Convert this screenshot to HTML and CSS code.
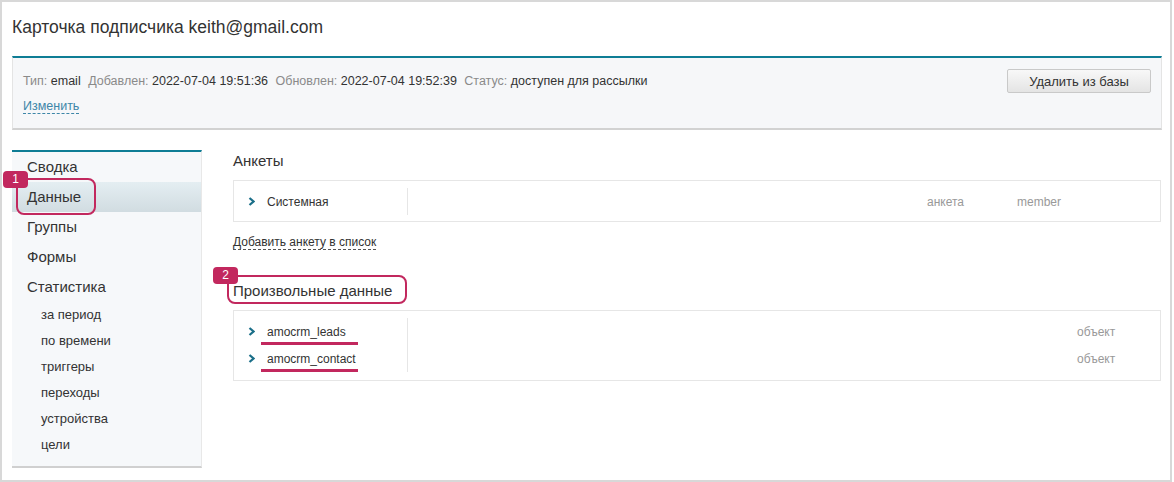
FILE: index.html
```html
<!DOCTYPE html>
<html lang="ru">
<head>
<meta charset="utf-8">
<title>Карточка подписчика</title>
<link rel="stylesheet" href="styles.css">
</head>
<body>
<div class="frame">
  <div class="title">Карточка подписчика keith@gmail.com</div>
  <div class="meta">
    <div class="meta-left">
      <div class="meta-info">
        <span class="lbl">Тип:</span> <span class="val">email</span>
        <span class="lbl">Добавлен:</span> <span class="val">2022-07-04 19:51:36</span>
        <span class="lbl">Обновлен:</span> <span class="val">2022-07-04 19:52:39</span>
        <span class="lbl">Статус:</span> <span class="val">доступен для рассылки</span>
      </div>
      <div class="edit-line"><span class="edit">Изменить</span></div>
    </div>
    <button class="btn">Удалить из базы</button>
  </div>
  <div class="body">
    <div class="sidebar">
      <div class="item">Сводка</div>
      <div class="item active">Данные</div>
      <div class="item">Группы</div>
      <div class="item">Формы</div>
      <div class="item">Статистика</div>
      <div class="sub">за период</div>
      <div class="sub">по времени</div>
      <div class="sub">триггеры</div>
      <div class="sub">переходы</div>
      <div class="sub">устройства</div>
      <div class="sub">цели</div>
      <div class="mark-box mark1"></div>
      <div class="badge badge1">1</div>
    </div>
    <div class="main">
      <div class="heading">Анкеты</div>
      <div class="table t1">
        <div class="row">
          <div class="name-cell"><svg class="chev" width="7" height="9" viewBox="0 0 7 9"><polyline points="1.5,1 5.5,4.5 1.5,8" fill="none" stroke="#1b6f89" stroke-width="2.2"/></svg><span class="name">Системная</span></div>
          <div class="spacer"></div>
          <div class="cell c-type">анкета</div>
          <div class="cell c-id">member</div>
        </div>
      </div>
      <div class="add-line"><span class="add">Добавить анкету в список</span></div>
      <div class="heading h2">Произвольные данные</div>
      <div class="table t2">
        <div class="row r2">
          <div class="name-cell"><svg class="chev" width="7" height="9" viewBox="0 0 7 9"><polyline points="1.5,1 5.5,4.5 1.5,8" fill="none" stroke="#1b6f89" stroke-width="2.2"/></svg><span class="name">amocrm_leads</span><span class="uline"></span></div>
          <div class="spacer"></div>
          <div class="cell c-obj">объект</div>
        </div>
        <div class="row r2">
          <div class="name-cell"><svg class="chev" width="7" height="9" viewBox="0 0 7 9"><polyline points="1.5,1 5.5,4.5 1.5,8" fill="none" stroke="#1b6f89" stroke-width="2.2"/></svg><span class="name">amocrm_contact</span><span class="uline"></span></div>
          <div class="spacer"></div>
          <div class="cell c-obj">объект</div>
        </div>
      </div>
      <div class="mark-box mark2"></div>
      <div class="badge badge2">2</div>
    </div>
  </div>
</div>
</body>
</html>
```

FILE: styles.css
```css
html, body {
  margin: 0;
  padding: 0;
  background: #fff;
}
body {
  font-family: "Liberation Sans", Arial, sans-serif;
  color: #333;
}
.frame {
  box-sizing: border-box;
  width: 1172px;
  height: 482px;
  border: 2px solid #d8d8d8;
  padding: 0 8px 0 10px;
}
.title {
  height: 54px;
  box-sizing: border-box;
  padding-top: 13px;
  line-height: 24px;
  font-size: 17.5px;
  color: #333;
}
.meta {
  display: flex;
  justify-content: space-between;
  align-items: flex-start;
  background: #f6f7f9;
  border-top: 2px solid #0e7d95;
  border-bottom: 2px solid #d2d2d2;
  border-left: 1px solid #e4e4e4;
  border-right: 1px solid #e4e4e4;
  padding: 11px 10px 12px 10px;
}
.meta-info {
  line-height: 24px;
  height: 24px;
  font-size: 12.5px;
  white-space: nowrap;
}
.lbl { color: #8a8a8a; }
.val { color: #333; margin-right: 4px; }
.edit-line {
  margin-top: 3px;
  line-height: 20px;
  height: 20px;
  font-size: 12.5px;
}
.edit {
  color: #3d86a8;
  border-bottom: 1px dashed #3d86a8;
}
.btn {
  width: 144px;
  height: 24px;
  border: 1px solid #c9c9c9;
  border-radius: 2px;
  background: linear-gradient(#f8f8f8, #e4e4e4);
  font-family: inherit;
  font-size: 13px;
  color: #333;
  padding: 0;
}
.body {
  display: flex;
  margin-top: 20px;
  gap: 31px;
}
.sidebar {
  position: relative;
  width: 190px;
  flex: none;
  box-sizing: border-box;
  background: #f6f8fa;
  border-top: 2px solid #0e7d95;
  border-bottom: 2px solid #d0d0d0;
  border-right: 1px solid #e8e8e8;
  padding-bottom: 8px;
}
.item {
  height: 30px;
  line-height: 30px;
  padding-left: 15px;
  font-size: 15px;
  color: #333;
}
.item.active {
  background: linear-gradient(#e4eef2, #d1dce1);
}
.sub {
  height: 26px;
  line-height: 26px;
  padding-left: 29px;
  font-size: 13px;
  color: #333;
}
.main {
  position: relative;
  flex: 1;
  padding-right: 1px;
}
.heading {
  margin-top: 1px;
  line-height: 20px;
  font-size: 15px;
  color: #333;
}
.heading.h2 {
  margin-top: 29px;
}
.table {
  margin-top: 9px;
  border: 1px solid #e6e6e6;
  background: #fff;
}
.t1 { padding: 7px 0 6px 0; }
.t2 { padding: 7px 0 8px 0; }
.row {
  display: flex;
  align-items: center;
  height: 27px;
  font-size: 12px;
}
.name-cell {
  position: relative;
  width: 174px;
  height: 100%;
  box-sizing: border-box;
  border-right: 1px solid #e6e6e6;
  display: flex;
  align-items: center;
  padding-left: 14px;
}
.chev { flex: none; }
.name {
  margin-left: 12px;
  color: #333;
}
.spacer { flex: 1; }
.cell { color: #999; }
.c-type { width: 90px; }
.c-id { width: 143px; }
.c-obj { width: 83px; }
.uline {
  position: absolute;
  left: 27px;
  width: 97px;
  bottom: 0;
  height: 3px;
  background: #c2285e;
}
.add-line {
  margin-top: 10px;
  line-height: 20px;
  font-size: 12px;
}
.add {
  color: #333;
  border-bottom: 1px dashed #555;
}
.mark-box {
  position: absolute;
  box-sizing: border-box;
  border: 2px solid #c2285e;
  border-radius: 8px;
}
.mark1 { left: 4px; top: 26px; width: 80px; height: 37px; }
.mark2 { left: -6px; top: 125px; width: 180px; height: 29px; }
.badge {
  position: absolute;
  width: 25px;
  height: 17px;
  border-radius: 4px;
  background: #c2285e;
  color: #fff;
  font-size: 12px;
  line-height: 17px;
  text-align: center;
}
.badge1 { left: -9px; top: 19px; }
.badge2 { left: -20px; top: 117px; }
```
